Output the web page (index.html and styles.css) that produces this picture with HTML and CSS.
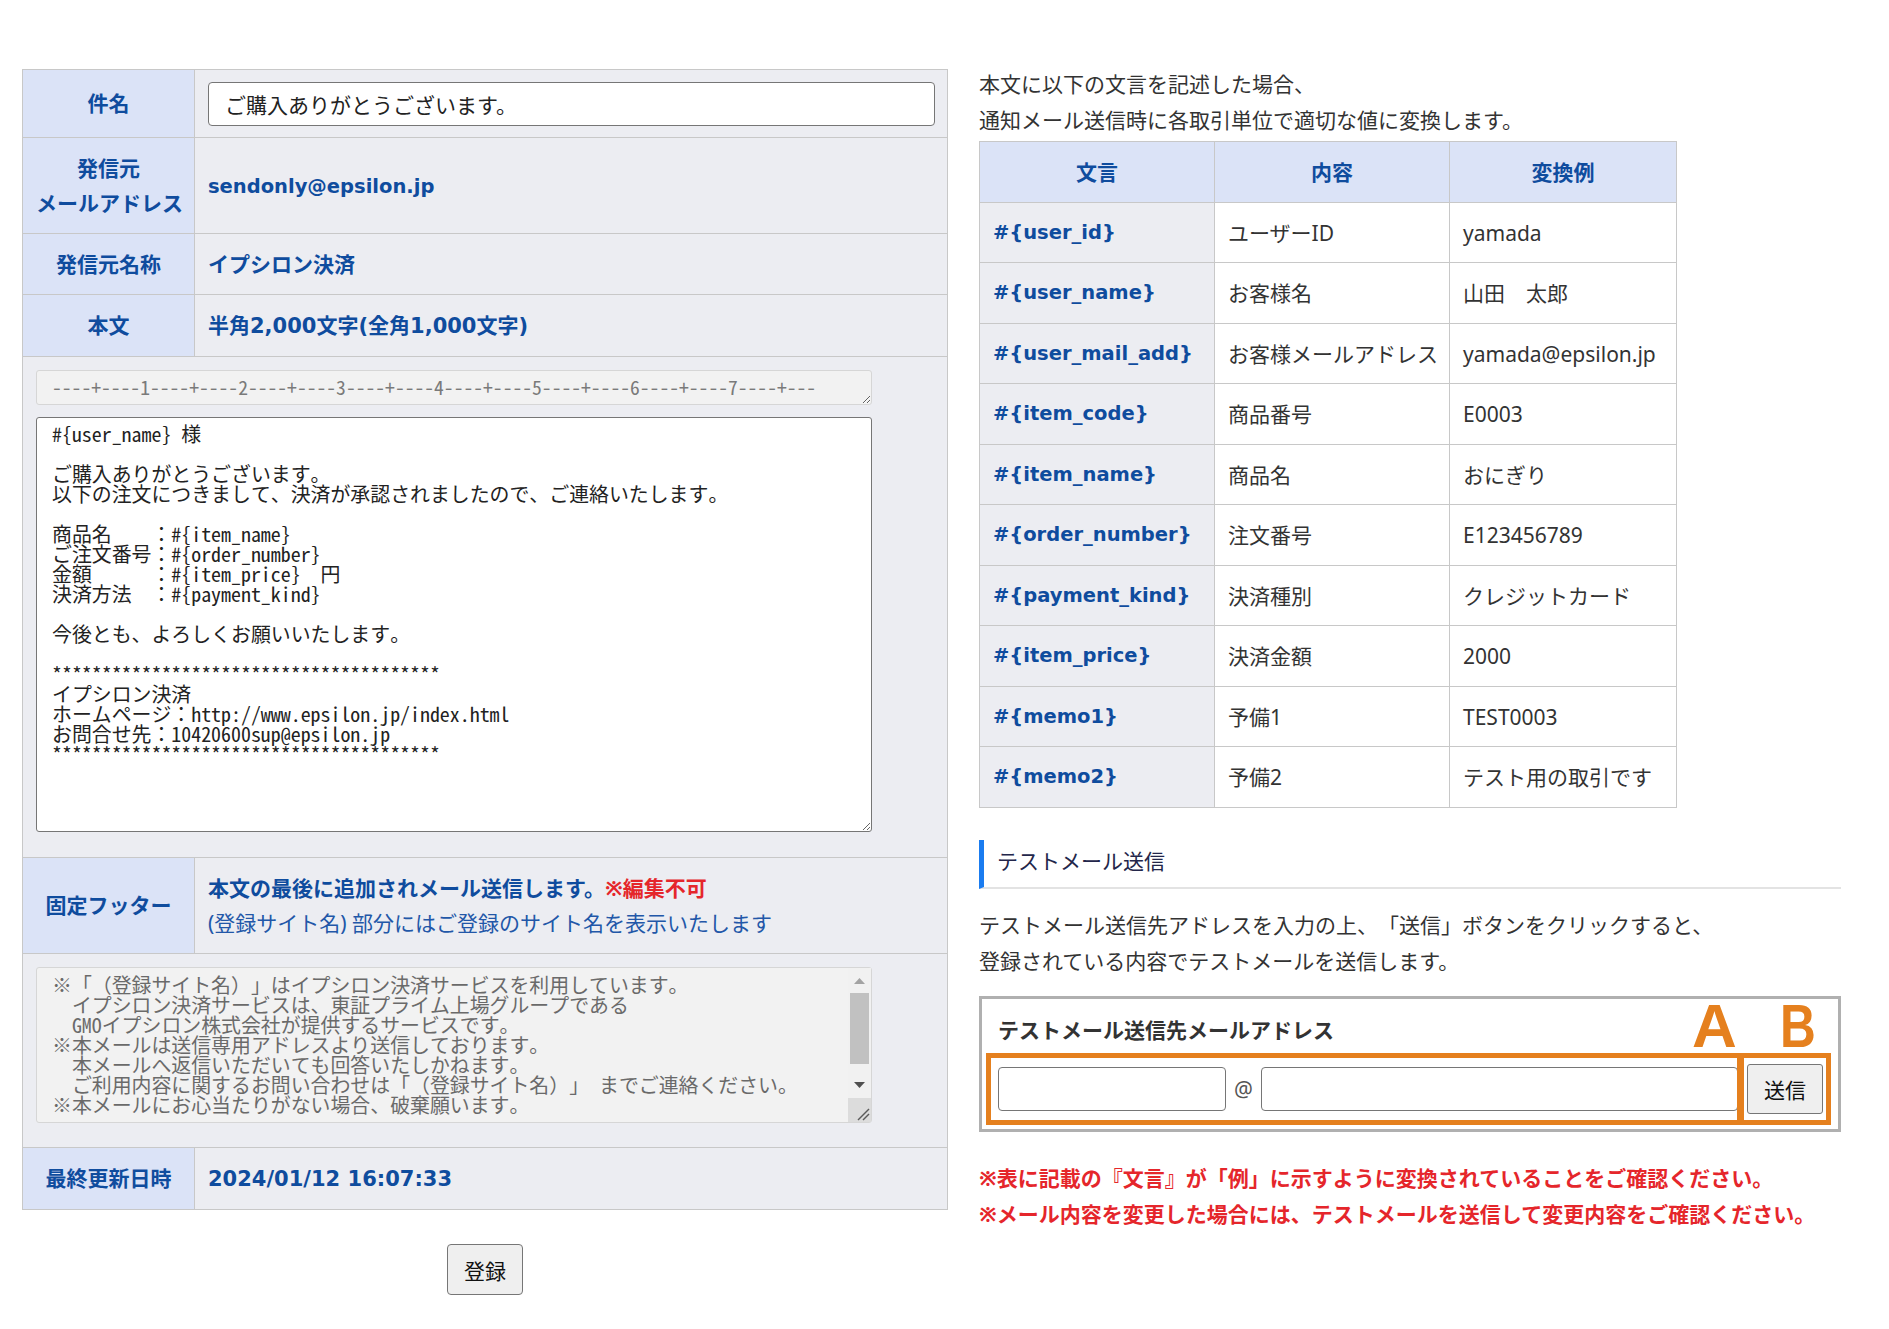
FILE: index.html
```html
<!DOCTYPE html>
<html lang="ja">
<head>
<meta charset="utf-8">
<title>メール設定</title>
<link rel="stylesheet" href="styles.css">
</head>
<body>
<div class="page">
  <div class="left">
    <table class="form">
      <colgroup><col class="col-label"><col class="col-value"></colgroup>
      <tr>
        <th>件名</th>
        <td class="td-input"><input class="subject" type="text" value="ご購入ありがとうございます。"></td>
      </tr>
      <tr>
        <th>発信元<br>メールアドレス</th>
        <td><span class="code">sendonly@epsilon.jp</span></td>
      </tr>
      <tr>
        <th>発信元名称</th>
        <td>イプシロン決済</td>
      </tr>
      <tr>
        <th>本文</th>
        <td>半角<span class="num">2,000</span>文字<span class="num">(</span>全角<span class="num">1,000</span>文字<span class="num">)</span></td>
      </tr>
      <tr>
        <td class="area" colspan="2"><textarea class="mono ruler" readonly>----+----1----+----2----+----3----+----4----+----5----+----6----+----7----+---</textarea><textarea class="mono body-text">#{user_name} 様

ご購入ありがとうございます。
以下の注文につきまして、決済が承認されましたので、ご連絡いたします。

商品名　　：#{item_name}
ご注文番号：#{order_number}
金額　　　：#{item_price}　円
決済方法　：#{payment_kind}

今後とも、よろしくお願いいたします。

***************************************
イプシロン決済
ホームページ：http://www.epsilon.jp/index.html
お問合せ先：10420600sup@epsilon.jp
***************************************</textarea></td>
      </tr>
      <tr>
        <th>固定フッター</th>
        <td>本文の最後に追加されメール送信します。<span class="red">※編集不可</span><br><span class="note-sub">(登録サイト名) 部分にはご登録のサイト名を表示いたします</span></td>
      </tr>
      <tr>
        <td class="area area-footer" colspan="2">
          <div class="scroll-wrap">
            <textarea class="mono footer-text" readonly>※「（登録サイト名）」はイプシロン決済サービスを利用しています。
　イプシロン決済サービスは、東証プライム上場グループである
　GMOイプシロン株式会社が提供するサービスです。
※本メールは送信専用アドレスより送信しております。
　本メールへ返信いただいても回答いたしかねます。
　ご利用内容に関するお問い合わせは「（登録サイト名）」 までご連絡ください。
※本メールにお心当たりがない場合、破棄願います。

</textarea>
            <div class="fake-scrollbar" aria-hidden="true">
              <svg width="23" height="154" viewBox="0 0 23 154">
                <rect x="0" y="0" width="23" height="154" fill="#f1f1f1"/>
                <polygon points="6,16 11.5,10 17,16" fill="#a3a3a3"/>
                <rect x="2" y="25" width="19" height="71" fill="#c1c1c1"/>
                <polygon points="6,114 17,114 11.5,120" fill="#505050"/>
                <rect x="0" y="130" width="23" height="24" fill="#dcdcdc"/>
                <line x1="10" y1="152" x2="21" y2="141" stroke="#5a5a5a" stroke-width="1.4"/>
                <line x1="15" y1="152" x2="21" y2="146" stroke="#5a5a5a" stroke-width="1.4"/>
              </svg>
            </div>
          </div>
        </td>
      </tr>
      <tr>
        <th>最終更新日時</th>
        <td><span class="num">2024/01/12 16:07:33</span></td>
      </tr>
    </table>
    <div class="submit"><button class="btn-submit" type="button">登録</button></div>
  </div>

  <div class="right">
    <p class="intro">本文に以下の文言を記述した場合、<br>通知メール送信時に各取引単位で適切な値に変換します。</p>
    <table class="vars">
      <colgroup><col class="c1"><col class="c2"><col class="c3"></colgroup>
      <thead>
        <tr><th>文言</th><th>内容</th><th>変換例</th></tr>
      </thead>
      <tbody>
        <tr><th>#{user_id}</th><td>ユーザーID</td><td>yamada</td></tr>
        <tr><th>#{user_name}</th><td>お客様名</td><td>山田　太郎</td></tr>
        <tr><th>#{user_mail_add}</th><td>お客様メールアドレス</td><td>yamada@epsilon.jp</td></tr>
        <tr><th>#{item_code}</th><td>商品番号</td><td>E0003</td></tr>
        <tr><th>#{item_name}</th><td>商品名</td><td>おにぎり</td></tr>
        <tr><th>#{order_number}</th><td>注文番号</td><td>E123456789</td></tr>
        <tr><th>#{payment_kind}</th><td>決済種別</td><td>クレジットカード</td></tr>
        <tr><th>#{item_price}</th><td>決済金額</td><td>2000</td></tr>
        <tr><th>#{memo1}</th><td>予備1</td><td>TEST0003</td></tr>
        <tr><th>#{memo2}</th><td>予備2</td><td>テスト用の取引です</td></tr>
      </tbody>
    </table>

    <h2 class="section-title">テストメール送信</h2>
    <p class="lead">テストメール送信先アドレスを入力の上、「送信」ボタンをクリックすると、<br>登録されている内容でテストメールを送信します。</p>

    <div class="test-box">
      <div class="test-title">テストメール送信先メールアドレス</div>
      <div class="test-row">
        <input class="mail-local" type="text">
        <span class="at">@</span>
        <input class="mail-domain" type="text">
        <button class="btn-send" type="button">送信</button>
        <span class="mark-divider"></span>
      </div>
      <span class="mark mark-a">A</span>
      <span class="mark mark-b">B</span>
    </div>

    <p class="notes">※表に記載の『文言』が「例」に示すように変換されていることをご確認ください。<br>※メール内容を変更した場合には、テストメールを送信して変更内容をご確認ください。</p>
  </div>
</div>
</body>
</html>
```
FILE: styles.css
```css
* {
  box-sizing: border-box;
}

body {
  margin: 0;
  background: #ffffff;
  font-family: "Noto Sans", "Noto Sans CJK JP", sans-serif;
  font-size: 21px;
  color: #333333;
  text-spacing-trim: space-all;
}

.page {
  display: flex;
  align-items: flex-start;
  gap: 31px;
  padding: 66px 0 40px 22px;
}

/* ---------- left column ---------- */
.left {
  width: 926px;
  padding-top: 3px;
}

.form {
  width: 926px;
  border-collapse: collapse;
  table-layout: fixed;
}

.col-label {
  width: 172px;
}

.form th,
.form td {
  border: 1px solid #c8c8c8;
  padding: 12.5px 13px;
  line-height: 35px;
  vertical-align: middle;
}

.form th {
  background: #dbe3f7;
  color: #0f4c9e;
  font-weight: 700;
  text-align: center;
  white-space: nowrap;
}

.form td {
  background: #ecedf2;
  color: #0f4c9e;
  font-weight: 700;
  text-align: left;
}

.form td.td-input {
  padding: 11.5px 12px 11.5px 13px;
}

.code {
  font-family: "DejaVu Sans", "Noto Sans CJK JP", sans-serif;
  font-size: 19.5px;
}

.num {
  font-family: "DejaVu Sans", "Noto Sans CJK JP", sans-serif;
  font-size: 21px;
}

.subject {
  display: block;
  width: 100%;
  height: 44px;
  border: 1px solid #767676;
  border-radius: 4px;
  padding: 0 16px;
  background: #ffffff;
  font-family: "Noto Sans", "Noto Sans CJK JP", sans-serif;
  font-size: 21px;
  font-weight: 400;
  color: #222222;
}

.form td.area {
  padding: 13px 13px 25px;
}

.form td.area-footer {
  padding: 13px 13px 24px;
}

.mono {
  display: block;
  width: 836px;
  font-family: "Noto Sans Mono CJK JP", "Noto Sans CJK JP", monospace;
  font-size: 19.9px;
  line-height: 20px;
  font-weight: 400;
  border-radius: 3px;
  margin: 0;
  text-spacing-trim: space-all;
}

.ruler {
  height: 35px;
  margin-bottom: 12px;
  padding: 6px 15px;
  background: #f2f2f2;
  border: 1px solid #d6d6d6;
  color: #7a7a7a;
  font-size: 19.6px;
  overflow: hidden;
}

.body-text {
  height: 415px;
  padding: 6px 15px;
  background: #ffffff;
  border: 1px solid #767676;
  color: #222222;
}

.scroll-wrap {
  position: relative;
  width: 836px;
}

.footer-text {
  height: 156px;
  padding: 7px 30px 7px 15px;
  background: #f2f2f2;
  border: 1px solid #d6d6d6;
  color: #6a6a6a;
  overflow: hidden;
  resize: none;
  white-space: pre;
}

.fake-scrollbar {
  position: absolute;
  top: 1px;
  right: 1px;
  width: 23px;
  height: 154px;
}

.fake-scrollbar svg {
  display: block;
}

.red {
  color: #e5262b;
}

.note-sub {
  font-weight: 400;
  color: #2257a8;
}

.submit {
  margin-top: 34px;
  text-align: center;
}

.btn-submit {
  width: 76px;
  height: 51px;
  padding: 0;
  background: #efefef;
  border: 1px solid #767676;
  border-radius: 4px;
  font-family: "Noto Sans CJK JP", sans-serif;
  font-size: 21px;
  color: #111111;
}

/* ---------- right column ---------- */
.right {
  width: 862px;
}

.intro {
  margin: 0;
  line-height: 36px;
}

.vars {
  margin-top: 3px;
  width: 697px;
  border-collapse: collapse;
  table-layout: fixed;
}

.c1 { width: 235px; }
.c2 { width: 235px; }
.c3 { width: 227px; }

.vars th,
.vars td {
  border: 1px solid #c8c8c8;
  padding: 12px 13px 11.5px;
  line-height: 36px;
  white-space: nowrap;
  text-align: left;
}

.vars thead th {
  background: #dbe3f7;
  color: #0f4c9e;
  font-weight: 700;
  text-align: center;
}

.vars tbody th {
  background: #ecedf2;
  color: #0f4c9e;
  font-weight: 700;
  font-family: "DejaVu Sans", "Noto Sans CJK JP", sans-serif;
  font-size: 19.5px;
}

.vars td {
  background: #ffffff;
  color: #333333;
  font-weight: 400;
}

.section-title {
  margin: 32px 0 0;
  padding: 3px 0 8px 13px;
  border-left: 5px solid #1a7cf0;
  border-bottom: 2px solid #e3e3e3;
  font-size: 21px;
  font-weight: 400;
  line-height: 36px;
  color: #23264a;
}

.lead {
  margin: 18px 0 0;
  line-height: 36px;
}

.test-box {
  position: relative;
  margin-top: 17px;
  border: 3px solid #b0b0b0;
  padding: 0 7px 4px 4px;
}

.test-title {
  padding: 14px 0 5px 12px;
  line-height: 35px;
  font-weight: 700;
  color: #333333;
}

.test-row {
  position: relative;
  display: flex;
  align-items: center;
  height: 72px;
  padding: 0 3px 0 7px;
  border: 5px solid #e5801e;
}

.mail-local,
.mail-domain {
  height: 44px;
  border: 1px solid #767676;
  border-radius: 4px;
  background: #ffffff;
  font-size: 21px;
}

.mail-local {
  width: 228px;
}

.at {
  width: 35px;
  text-align: center;
  color: #555555;
  font-size: 21px;
}

.mail-domain {
  flex: 1;
  min-width: 0;
}

.btn-send {
  width: 76px;
  height: 50px;
  margin-left: 9px;
  padding: 0;
  background: #efefef;
  border: 1px solid #767676;
  border-radius: 3px;
  font-family: "Noto Sans CJK JP", sans-serif;
  font-size: 21px;
  color: #111111;
}

.mark-divider {
  position: absolute;
  top: 0;
  bottom: 0;
  left: 746px;
  width: 7px;
  background: #e5801e;
}

.mark {
  position: absolute;
  top: -4px;
  font-family: "Liberation Sans", sans-serif;
  font-weight: 700;
  font-size: 62px;
  line-height: 1;
  color: #e5801e;
}

.mark-a {
  left: 710px;
}

.mark-b {
  left: 798px;
  transform: scaleX(0.8);
  transform-origin: left center;
}

.notes {
  margin: 28px 0 0;
  line-height: 36px;
  font-weight: 700;
  color: #e5262b;
}
```
